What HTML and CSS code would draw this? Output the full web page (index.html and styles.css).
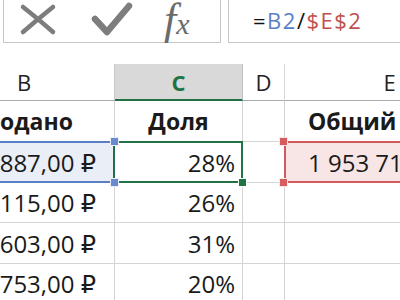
FILE: index.html
```html
<!DOCTYPE html>
<html lang="ru">
<head>
  <meta charset="UTF-8">
  <meta name="viewport" content="width=device-width, initial-scale=1.0">
  <title>Доля от общего</title>
  <link rel="stylesheet" href="styles.css">
</head>
<body>
  <div class="formula-bar">
    <div class="tools">
      <svg class="tool-icons" width="140" height="42" viewBox="0 0 140 42">
        <path d="M20 7 Q34 18 50 32 M50 7 Q35 19 20 32" fill="none" stroke="#7d7d7d" stroke-width="4.5" stroke-linecap="round"/>
        <path d="M92 19 L104 32 L126 6" fill="none" stroke="#7d7d7d" stroke-width="6.5" stroke-linecap="round" stroke-linejoin="round"/>
      </svg>
      <span class="fx"><span class="fx-f">f</span><span class="fx-x">x</span></span>
    </div>
    <div class="formula">=<span class="ref-b">B2</span>/<span class="ref-e">$E$2</span></div>
  </div>

  <div class="gap"></div>

  <div class="sheet">
    <div class="col-head col-b">B</div>
    <div class="col-head col-c">C</div>
    <div class="col-head">D</div>
    <div class="col-head col-e">E</div>

    <div class="cell title clip-left">одано</div>
    <div class="cell title center">Доля</div>
    <div class="cell"></div>
    <div class="cell title left">Общий</div>

    <div class="cell num sel-blue">887,00 ₽<span class="handle blue top-right"></span><span class="handle blue bottom-right"></span></div>
    <div class="cell num pct sel-green">28%<span class="handle green fill"></span></div>
    <div class="cell"></div>
    <div class="cell left sel-red">1 953 71<span class="handle red top-left"></span><span class="handle red bottom-left"></span></div>

    <div class="cell num">115,00 ₽</div>
    <div class="cell num pct">26%</div>
    <div class="cell"></div>
    <div class="cell"></div>

    <div class="cell num">603,00 ₽</div>
    <div class="cell num pct">31%</div>
    <div class="cell"></div>
    <div class="cell"></div>

    <div class="cell num">753,00 ₽</div>
    <div class="cell num pct">20%</div>
    <div class="cell"></div>
    <div class="cell"></div>
  </div>
</body>
</html>
```

FILE: styles.css
```css
body {
  margin: 0;
  width: 400px;
  height: 300px;
  overflow: hidden;
  background-color: #ffffff;
  font-family: "Open Sans", "DejaVu Sans", sans-serif;
  color: #1a1a1a;
}

.formula-bar {
  display: flex;
  height: 43px;
}

.tools {
  display: flex;
  align-items: center;
  width: 218px;
  margin-left: 3px;
  border-right: 1px solid #c6c6c6;
  border-left: 1px solid #c6c6c6;
  border-bottom: 1px solid #c6c6c6;
  box-sizing: border-box;
}

.tool-icons {
  display: block;
  margin-left: -1px;
}

.fx {
  margin-left: 21px;
  margin-top: -2px;
  font-family: "Liberation Serif", serif;
  font-style: italic;
  color: #6a6a6a;
  line-height: 1;
}

.fx-f {
  font-size: 44px;
}

.fx-x {
  font-size: 30px;
}

.formula {
  flex: 1;
  margin-left: 7px;
  padding-left: 24px;
  border-left: 1px solid #c6c6c6;
  border-bottom: 1px solid #c6c6c6;
  font-size: 22px;
  letter-spacing: 1.5px;
  line-height: 41px;
  color: #111;
}

.ref-b {
  color: #5b7fc6;
}

.ref-e {
  color: #c0504d;
}

.gap {
  height: 21px;
}

.sheet {
  display: grid;
  grid-template-columns: 115px 128px 42px 1fr;
  grid-template-rows: 37px 41px 41px 40px 41px 40px;
}

.col-head {
  display: flex;
  align-items: center;
  justify-content: center;
  font-size: 22px;
  color: #222;
  border-right: 1px solid #d6d6d6;
  border-bottom: 1px solid #ababab;
  box-sizing: border-box;
}

.col-b {
  justify-content: flex-start;
  padding-left: 17px;
  border-right-color: #c8c8c8;
}

.col-c {
  background-color: #d9d9d9;
  color: #217346;
  font-weight: bold;
  border-right-color: #c0c0c0;
  border-bottom: 2px solid #217346;
}

.col-e {
  justify-content: flex-end;
  padding-right: 7px;
}

.cell {
  position: relative;
  display: flex;
  align-items: center;
  font-size: 24px;
  white-space: nowrap;
  border-right: 1px solid #d4d4d4;
  border-bottom: 1px solid #d4d4d4;
  box-sizing: border-box;
}

.title {
  font-size: 23px;
  font-weight: bold;
}

.clip-left {
  padding-left: 0;
}

.center {
  justify-content: center;
}

.left {
  padding-left: 23px;
}

.num {
  justify-content: flex-end;
  padding-right: 18px;
}

.pct {
  padding-right: 7px;
}

.sel-blue {
  background-color: #eaeef7;
}

.sel-blue::after {
  content: "";
  position: absolute;
  left: 0;
  right: 2px;
  top: -1px;
  bottom: -1px;
  border-top: 2px solid #5b7fc6;
  border-bottom: 2px solid #5b7fc6;
}

.sel-green::after {
  content: "";
  position: absolute;
  left: -2px;
  right: -1px;
  top: -1px;
  bottom: -1px;
  border: 2px solid #217346;
}

.sel-red {
  background-color: #f8e5e5;
}

.sel-red::after {
  content: "";
  position: absolute;
  left: -1px;
  right: 0;
  top: -1px;
  bottom: -1px;
  border: 2px solid #d05a5c;
  border-right: none;
}

.handle {
  position: absolute;
  width: 7px;
  height: 7px;
  z-index: 2;
}

.handle.blue {
  background-color: #6a8ad0;
  border: 1px solid #eaeef7;
}

.handle.red {
  background-color: #d75c60;
  border: 1px solid #f8e5e5;
}

.handle.green {
  background-color: #217346;
  border: 1px solid #ffffff;
}

.top-right {
  right: -5px;
  top: -5px;
}

.bottom-right {
  right: -5px;
  bottom: -5px;
}

.top-left {
  left: -6px;
  top: -5px;
}

.bottom-left {
  left: -6px;
  bottom: -5px;
}

.fill {
  right: -5px;
  bottom: -5px;
}
```
